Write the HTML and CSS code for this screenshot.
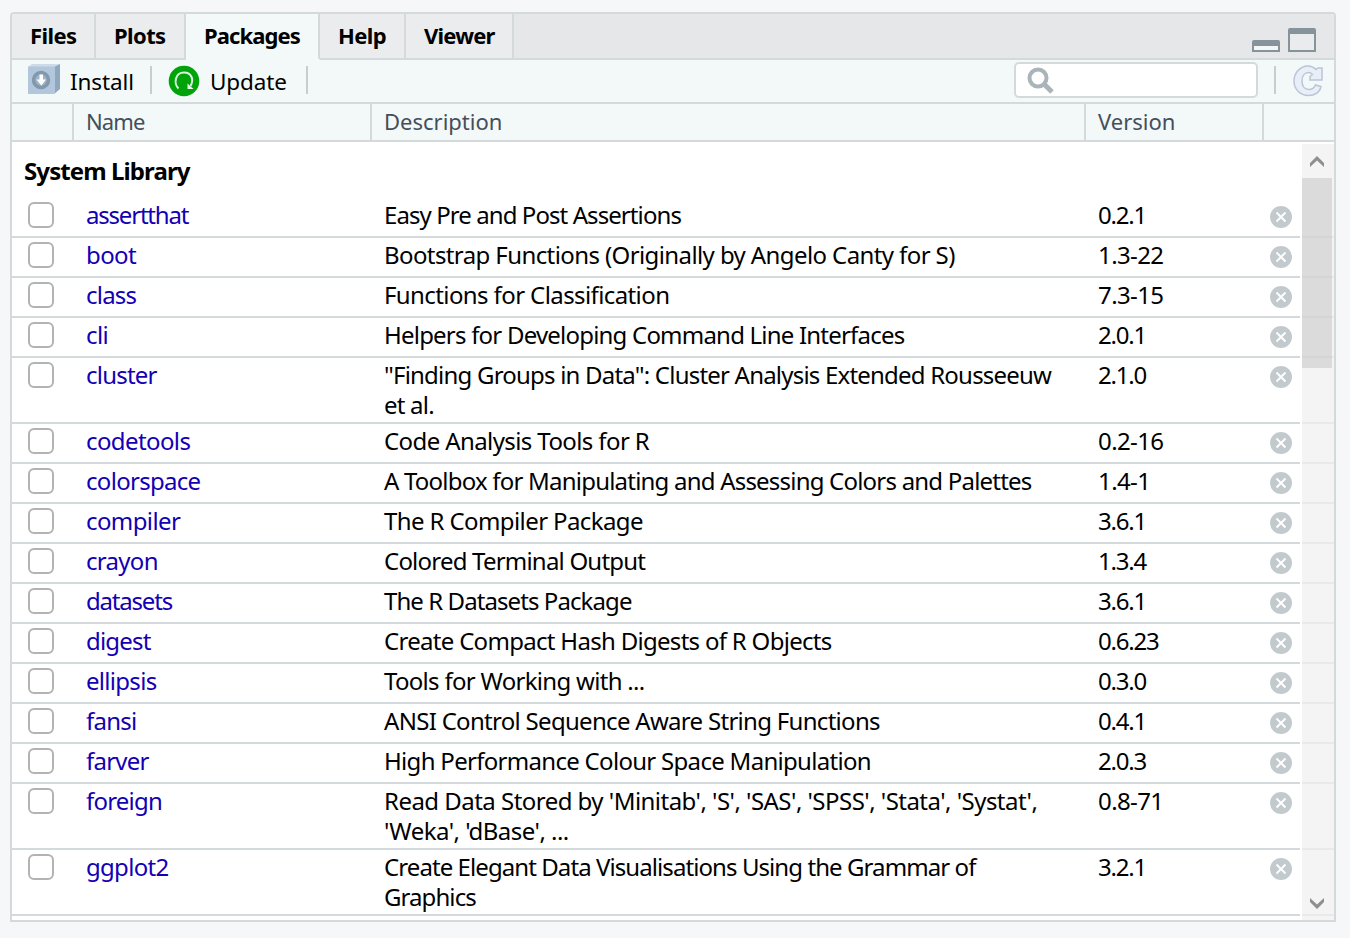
FILE: index.html
```html
<!DOCTYPE html>
<html lang="en">
<head>
<meta charset="utf-8">
<title>Packages</title>
<link rel="stylesheet" href="styles.css">
</head>
<body>
<svg class="sprite" width="0" height="0" aria-hidden="true">
  <symbol id="remove" viewBox="0 0 22 22">
    <circle cx="11" cy="11" r="11" fill="#c3cacd"/>
    <path d="M6.500 6.500l9 9M15.500 6.500l-9 9" stroke="#fff" stroke-width="1.900"/>
  </symbol>
</svg>
<section class="panel">
  <nav class="tabs">
    <a class="tab tab-files">Files</a>
    <a class="tab tab-plots">Plots</a>
    <a class="tab tab-packages active">Packages</a>
    <a class="tab tab-help">Help</a>
    <a class="tab tab-viewer">Viewer</a>
    <div class="tab-fill">
      <svg width="64" height="24" viewBox="0 0 64 24">
        <path d="M0 24V14a2 2 0 0 1 2-2h24a2 2 0 0 1 2 2v10z" fill="#87939a"/>
        <path d="M2 18h24v4H2z" fill="#f4f6f6"/>
        <path d="M36 24V2a2 2 0 0 1 2-2h24a2 2 0 0 1 2 2v22z" fill="#87939a"/>
        <path d="M38 6h24v16H38z" fill="#e9ebec"/>
      </svg>
    </div>
  </nav>
  <div class="toolbar">
    <svg class="install-icon" width="32" height="32" viewBox="0 0 32 32">
      <path d="M0 3l4-3h28l-6 3z" fill="#cddbe8"/>
      <path d="M26 3l6-3v25l-6 5z" fill="#90a8bd"/>
      <path d="M0 2.500h27v27.500H0z" fill="#b2c7dc"/>
      <circle cx="13" cy="16" r="7.500" fill="#9fb3c6" stroke="#8298ad" stroke-width="3.500"/>
      <path d="M11.500 10.500h3.500v5h3l-4.700 6-4.800-6h3z" fill="#fff"/>
    </svg>
    <span class="label install">Install</span>
    <i class="sep"></i>
    <svg class="update-icon" width="32" height="32" viewBox="0 0 32 32">
      <circle cx="16" cy="16" r="15.300" fill="#00a30a"/>
      <path d="M10.500 23.500C5.500 18.500 7 7.500 16 7.500C24 7.500 26 15 22.500 21" fill="none" stroke="#d9f3db" stroke-width="2"/>
      <path d="M19.500 18.500v5.500h6z" fill="#e9f8ea"/>
    </svg>
    <span class="label update">Update</span>
    <i class="sep"></i>
    <div class="search">
      <svg width="28" height="28" viewBox="0 0 28 28" fill="none" stroke="#abb4b9">
        <circle cx="11" cy="11" r="8.500" stroke-width="4"/>
        <path d="M17 17l8 8" stroke-width="5"/>
      </svg>
    </div>
    <i class="sep sep-right"></i>
    <svg class="refresh" width="32" height="34" viewBox="0 0 32 34">
      <path d="M24 5.500Q20.500 2 16 2C8 2 2 9 2 17s6 14.500 14.500 14.500c6.500 0 11.500-3.500 12.500-9l-5.500-1.500c-1.200 3-3.500 4.500-6.500 4.500-4.500 0-7-3.500-7-8.500s2.500-8.500 6.500-8.500c2 0 3 .8 4 2l-2.500 2v3.500h12V4h-4z" fill="#e8eff9" stroke="#bcc5d5" stroke-width="1.500"/>
    </svg>
  </div>
  <div class="grid head">
    <span></span><span>Name</span><span>Description</span><span>Version</span><span></span>
  </div>
  <div class="body">
    <div class="list">
      <h2 class="group">System Library</h2>
      <div class="grid row"><i class="box"></i><a class="t3">assertthat</a><p class="t3">Easy Pre and Post Assertions</p><span class="t3">0.2.1</span><svg class="x"><use href="#remove"/></svg></div>
      <div class="grid row"><i class="box"></i><a>boot</a><p>Bootstrap Functions (Originally by Angelo Canty for S)</p><span>1.3-22</span><svg class="x"><use href="#remove"/></svg></div>
      <div class="grid row"><i class="box"></i><a class="t2">class</a><p>Functions for Classification</p><span>7.3-15</span><svg class="x"><use href="#remove"/></svg></div>
      <div class="grid row"><i class="box"></i><a>cli</a><p class="t2">Helpers for Developing Command Line Interfaces</p><span class="t3">2.0.1</span><svg class="x"><use href="#remove"/></svg></div>
      <div class="grid row"><i class="box"></i><a class="t2">cluster</a><p class="t2">"Finding Groups in Data": Cluster Analysis Extended Rousseeuw<br>et al.</p><span class="t3">2.1.0</span><svg class="x"><use href="#remove"/></svg></div>
      <div class="grid row"><i class="box"></i><a>codetools</a><p>Code Analysis Tools for R</p><span>0.2-16</span><svg class="x"><use href="#remove"/></svg></div>
      <div class="grid row"><i class="box"></i><a class="t1">colorspace</a><p class="t2">A Toolbox for Manipulating and Assessing Colors and Palettes</p><span>1.4-1</span><svg class="x"><use href="#remove"/></svg></div>
      <div class="grid row"><i class="box"></i><a>compiler</a><p>The R Compiler Package</p><span class="t3">3.6.1</span><svg class="x"><use href="#remove"/></svg></div>
      <div class="grid row"><i class="box"></i><a class="t1">crayon</a><p class="t2">Colored Terminal Output</p><span class="t3">1.3.4</span><svg class="x"><use href="#remove"/></svg></div>
      <div class="grid row"><i class="box"></i><a class="t3">datasets</a><p class="t3">The R Datasets Package</p><span class="t3">3.6.1</span><svg class="x"><use href="#remove"/></svg></div>
      <div class="grid row"><i class="box"></i><a class="t2">digest</a><p class="t1">Create Compact Hash Digests of R Objects</p><span class="t3">0.6.23</span><svg class="x"><use href="#remove"/></svg></div>
      <div class="grid row"><i class="box"></i><a class="t1">ellipsis</a><p class="t1">Tools for Working with ...</p><span class="t3">0.3.0</span><svg class="x"><use href="#remove"/></svg></div>
      <div class="grid row"><i class="box"></i><a class="t2">fansi</a><p class="t1">ANSI Control Sequence Aware String Functions</p><span class="t3">0.4.1</span><svg class="x"><use href="#remove"/></svg></div>
      <div class="grid row"><i class="box"></i><a class="t2">farver</a><p class="t1">High Performance Colour Space Manipulation</p><span class="t3">2.0.3</span><svg class="x"><use href="#remove"/></svg></div>
      <div class="grid row"><i class="box"></i><a class="t2">foreign</a><p class="t0">Read Data Stored by 'Minitab', 'S', 'SAS', 'SPSS', 'Stata', 'Systat',<br>'Weka', 'dBase', ...</p><span>0.8-71</span><svg class="x"><use href="#remove"/></svg></div>
      <div class="grid row"><i class="box"></i><a class="t1">ggplot2</a><p class="t3">Create Elegant Data Visualisations Using the Grammar of<br>Graphics</p><span class="t3">3.2.1</span><svg class="x"><use href="#remove"/></svg></div>
    </div>
    <div class="scrollbar">
      <svg width="16" height="12" viewBox="0 0 16 12"><path d="M1 12V8l7-7 7 7v4L8 5.500z" fill="#8f8f8f"/></svg>
      <div class="thumb"></div>
      <svg class="down" width="16" height="12" viewBox="0 0 16 12"><path d="M1 0v4l7 7 7-7V0L8 6.500z" fill="#8f8f8f"/></svg>
    </div>
  </div>
</section>
</body>
</html>
```
FILE: styles.css
```css
* { box-sizing: border-box; }
body {
  margin: 0;
  padding: 12px 14px 16px 10px;
  height: 938px;
  overflow: hidden;
  background: #f5f7f9;
  color: #000;
  font: 24px/30px "Noto Sans", "Open Sans", sans-serif;
  letter-spacing: -0.6px;
  white-space: nowrap;
}
.sprite { position: absolute; }
.panel {
  display: flex;
  flex-direction: column;
  height: 910px;
  border: 2px solid #d4dadc;
  border-radius: 4px 4px 0 0;
  background: #fff;
  overflow: hidden;
}
.tabs { display: flex; height: 46px; font-size: 22px; font-weight: 700; }
.tab {
  padding: 6px 0 0 18px;
  background: #ebecee;
  border-right: 2px solid #d4dadc;
  border-bottom: 2px solid #d4dadc;
}
.tab.active { background: #f3f8f8; border-bottom-color: #f3f8f8; }
.tab-files { width: 84px; }
.tab-plots { width: 90px; }
.tab-packages { width: 134px; letter-spacing: -0.9px; }
.tab-help { width: 86px; }
.tab-viewer { width: 108px; letter-spacing: -0.8px; }
.tab-fill {
  flex: 1;
  display: flex;
  justify-content: flex-end;
  padding: 14px 18px 0 0;
  background: #e6e7e8;
  border-bottom: 2px solid #d4dadc;
}
.toolbar {
  display: flex;
  align-items: center;
  height: 44px;
  padding-left: 16px;
  background: #f3f8f8;
  border-bottom: 2px solid #d4dadc;
  font-size: 22.5px;
  letter-spacing: -0.1px;
}
.install-icon { margin-top: -2px; }
.label { padding: 1px 0 0 10px; }
.install { width: 90px; }
.update { width: 106px; }
.sep { width: 2px; height: 28px; background: #c9cdcf; margin-top: -2px; }
.update-icon { margin-left: 16px; }
.search {
  width: 244px;
  height: 36px;
  margin: -2px 0 0 auto;
  padding: 3px 0 0 11px;
  border: 2px solid #d4dadc;
  border-radius: 5px;
  background: #fff;
}
.sep-right { margin-left: 16px; }
.refresh { margin: 0 10px 0 16px; }
.grid { display: grid; grid-template-columns: 62px 298px 714px 178px 70px; }
.head {
  height: 38px;
  background: #f3f8f8;
  border-bottom: 2px solid #d4dadc;
  color: #434f5b;
  font-size: 22px;
  line-height: 35px;
  letter-spacing: 0;
}
.head span { border-right: 2px solid #d4dadc; padding-left: 12px; }
.head span:nth-child(2) { letter-spacing: -0.9px; }
.head span:last-child { border: 0; }
.body { display: flex; flex: 1; padding-top: 2px; }
.list { width: 1322px; margin-right: -32px; }
.list .grid { grid-template-columns: 62px 298px 714px 178px 36px; }
.group {
  margin: 0;
  height: 54px;
  padding: 12px 0 0 12px;
  font-size: 24px;
  font-weight: 700;
  letter-spacing: -0.9px;
}
.row { min-height: 40px; padding: 2px 0; border-bottom: 2px solid #d4dadc; }
.row a, .row p, .row span { margin: 0; padding-left: 12px; }
.row a { color: #1400b4; }
.row .t0 { letter-spacing: -0.53px; }
.row .t1 { letter-spacing: -0.7px; }
.row .t2 { letter-spacing: -0.79px; }
.row .t3 { letter-spacing: -0.92px; }
.row a.t3, .row span.t3 { letter-spacing: -1.2px; }
.box {
  width: 26px;
  height: 26px;
  margin: 2px 0 0 16px;
  border: 2px solid #b3b3b3;
  border-radius: 6px;
}
.x { width: 22px; height: 22px; margin: 6px 0 0 6px; }
/* Semi-transparent, so the row rules show faintly underneath. */
.scrollbar {
  position: relative;
  display: flex;
  flex-direction: column;
  align-items: center;
  width: 32px;
  padding: 11px 2px 10px 0;
  background: rgba(240, 240, 240, .7);
  box-shadow: -2px 0 #fff;
}
.thumb { width: 30px; height: 190px; margin-top: 11px; background: rgba(190, 190, 190, .46); }
.down { margin-top: auto; }
```
